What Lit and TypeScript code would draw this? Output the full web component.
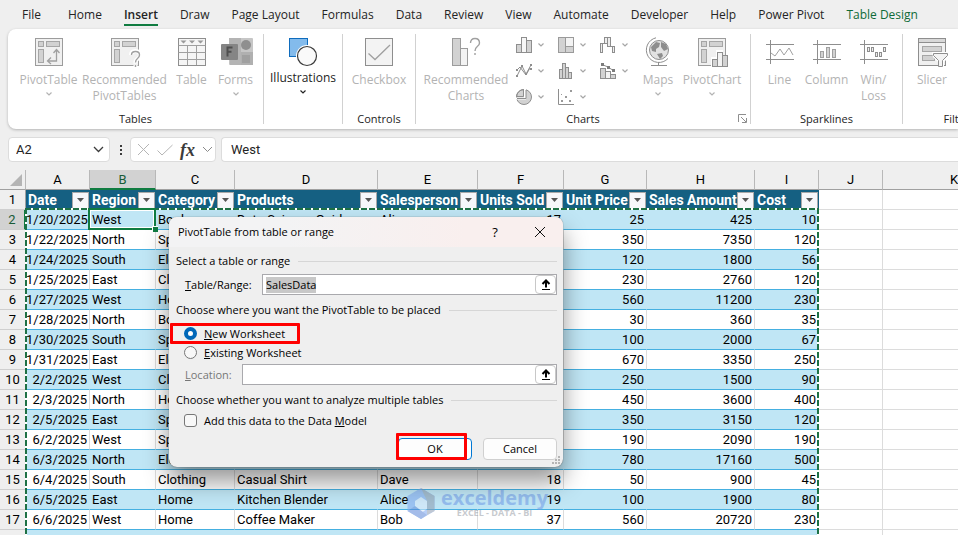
import { LitElement, html, svg, css, nothing } from "lit";
import { customElement } from "lit/decorators.js";
import { classMap } from "lit/directives/class-map.js";

const TABS = ["File", "Home", "Insert", "Draw", "Page Layout", "Formulas", "Data", "Review", "View", "Automate", "Developer", "Help", "Power Pivot", "Table Design"];

const HEADERS = ["Date", "Region", "Category", "Products", "Salesperson", "Units Sold", "Unit Price", "Sales Amount", "Cost"];
const LETTERS = "ABCDEFGHIJK".split("");

const ROWS: string[][] = [
  ["1/20/2025", "West", "Books", "Data Science Guide", "Alice", "17", "25", "425", "10"],
  ["1/22/2025", "North", "Sports", "", "", "", "350", "7350", "120"],
  ["1/24/2025", "South", "Electronics", "", "", "", "120", "1800", "56"],
  ["1/25/2025", "East", "Clothing", "", "", "", "230", "2760", "120"],
  ["1/27/2025", "West", "Home", "", "", "", "560", "11200", "230"],
  ["1/28/2025", "North", "Books", "", "", "", "30", "360", "35"],
  ["1/30/2025", "South", "Sports", "", "", "", "100", "2000", "67"],
  ["1/31/2025", "East", "Electronics", "", "", "", "670", "3350", "250"],
  ["2/2/2025", "West", "Clothing", "", "", "", "250", "1500", "90"],
  ["2/3/2025", "North", "Home", "", "", "", "450", "3600", "400"],
  ["2/5/2025", "East", "Sports", "", "", "", "350", "3150", "120"],
  ["6/2/2025", "West", "Sports", "", "", "", "190", "2090", "190"],
  ["6/3/2025", "North", "Electronics", "", "", "", "780", "17160", "500"],
  ["6/4/2025", "South", "Clothing", "Casual Shirt", "Dave", "18", "50", "900", "45"],
  ["6/5/2025", "East", "Home", "Kitchen Blender", "Alice", "19", "100", "1900", "80"],
  ["6/6/2025", "West", "Home", "Coffee Maker", "Bob", "37", "560", "20720", "230"],
  ["", "", "", "", "", "", "", "", ""],
];

const big = (body: unknown) => html`<svg class="big" viewBox="0 0 30 30" width="30" height="30" aria-hidden="true">${body}</svg>`;
const small = (body: unknown) => html`<svg viewBox="0 0 16 16" width="16" height="16" aria-hidden="true">${body}</svg>`;
const chevron = () => html`<svg class="chev" viewBox="0 0 6 4" width="6" height="4" aria-hidden="true"><path d="M.5 .5 3 3 5.5 .5" fill="none" stroke="currentColor" stroke-width="1.2"/></svg>`;

const pivotFrame = svg`<rect x="1.500" y="1.500" width="27" height="27" fill="#f0f0f0" stroke="#9c9c9c"/>
  <g fill="#d2d2d2" stroke="#a6a6a6"><rect x="4.500" y="4.500" width="5" height="5"/><rect x="12.500" y="4.500" width="13" height="5"/><rect x="4.500" y="12.500" width="5" height="13"/></g>`;

const sparkFrame = svg`<path d="M1 7.500H29M1 22.500H29M5.500 3V27" fill="none" stroke="#8e8e8e"/>`;

const ICON = {
  pivot: big(svg`${pivotFrame}<path d="M22.500 13v11H14M19.500 16l3-3.500 3 3.500M17 20.500 13.500 24l3.500 3" fill="none" stroke="#a0a0a0" stroke-width="1.300"/>`),
  recPivot: big(svg`${pivotFrame}<path d="M21 18q0-4 4.500-4t4.500 4q0 2.500-2.500 4t-2 4.500M25.500 28v2" fill="none" stroke="#fff" stroke-width="4"/><path d="M21.500 18q0-3.500 4-3.500t4 3.500q0 2-2 3.500t-2 4M25.500 28v2" fill="none" stroke="#a0a0a0" stroke-width="1.400"/>`),
  table: big(svg`<rect x="1.500" y="1.500" width="27" height="27" fill="#f5f5f5" stroke="#8e8e8e"/><path d="M1.500 8.500H28.500M1.500 15.500H28.500M1.500 22.500H28.500M10.500 8.500V28M19.500 8.500V28" stroke="#a0a0a0" fill="none"/><path d="M3.500 3.500h6L6.500 6.500zM12 3.500h6L15 6.500zM20.500 3.500h6L23.500 6.500z" fill="#9a9a9a"/>`),
  forms: big(svg`<rect x="8" y="1" width="24" height="27" rx="1" fill="#c6c6c6"/><path d="M8 1h12v27H9z" fill="#b4b4b4"/><rect x="20" y="15" width="12" height="13" fill="#b0b0b0"/><circle cx="25" cy="8" r="5" fill="#8f8f8f"/><rect x="21" y="18" width="8" height="8" fill="#a0a0a0"/><rect x="0" y="7" width="17" height="16" rx="1" fill="#858585"/><path d="M6.500 19.500v-9h5M6.500 14.800h4" fill="none" stroke="#4f4f4f" stroke-width="2"/>`),
  shapes: big(svg`<rect x="1.500" y="1.500" width="18" height="18" fill="#83bbec" stroke="#0f6cbd"/><circle cx="19" cy="19" r="11" fill="#fff"/><circle cx="19" cy="19" r="9.500" fill="#fafafa" stroke="#3b3b3b" stroke-width="1.200"/>`),
  check: big(svg`<rect x="1.500" y="1.500" width="27" height="27" fill="#f3f3f3" stroke="#8e8e8e"/><path d="M4.500 16.500l6.500 6L26 8" fill="none" stroke="#a0a0a0" stroke-width="1.300"/>`),
  recChart: big(svg`<g stroke="#9c9c9c"><rect x="1.500" y="1.500" width="8" height="27" fill="#d2d2d2"/><rect x="9.500" y="11.500" width="7" height="17" fill="#f3f3f3"/></g><path d="M19.500 6q0-4.500 4.500-4.500T28.500 6q0 2-2.200 3.500T24 14M24 16v2" fill="none" stroke="#a0a0a0" stroke-width="1.400"/>`),
  maps: big(svg`<circle cx="16" cy="13" r="9.500" fill="#e2e2e2" stroke="#8e8e8e"/><path d="M8 10l5-5 4 1-1 4-3 2 0 3-4-1zM18 5l5 2 2 5-4 2-3-4zM14 17l5-1 1 3-3 3z" fill="#8e8e8e"/><path d="M13 .8A12.500 12.500 0 1 0 25 21.500M15.500 25v3M8 28.500H24" fill="none" stroke="#8e8e8e"/>`),
  pivotChart: big(svg`${pivotFrame}<path d="M14 30V20h5v-7h7v5h5v12z" fill="#fff"/><g stroke="#8e8e8e" fill="#d2d2d2"><rect x="15.500" y="22.500" width="5" height="7"/><rect x="25.500" y="18.500" width="5" height="11"/><rect x="20.500" y="15.500" width="5" height="14" fill="#f3f3f3"/></g>`),
  line: big(svg`${sparkFrame}<path d="M6 16l4 3 5-7 4 6 5-7 4 7" fill="none" stroke="#a0a0a0"/>`),
  column: big(svg`${sparkFrame}<g fill="#d2d2d2" stroke="#a0a0a0"><rect x="8.500" y="14.500" width="3" height="6"/><rect x="14.500" y="10.500" width="3" height="10"/><rect x="20.500" y="12.500" width="3" height="8"/></g>`),
  winLoss: big(svg`${sparkFrame}<g fill="#eee" stroke="#8e8e8e"><rect x="8.500" y="10.500" width="2" height="4"/><rect x="12.500" y="10.500" width="2" height="4"/><rect x="16.500" y="15.500" width="2" height="4"/><rect x="20.500" y="15.500" width="2" height="4"/><rect x="24.500" y="10.500" width="2" height="4"/></g>`),
  slicer: big(svg`<rect x="1.500" y="1.500" width="27" height="27" fill="#f0f0f0" stroke="#8e8e8e"/><path d="M2 2h26v3H2z" fill="#d8d8d8"/><path d="M1.500 5.500h27" stroke="#8e8e8e"/><g fill="#d2d2d2" stroke="#a6a6a6"><rect x="5.500" y="9.500" width="19" height="5"/><rect x="5.500" y="18.500" width="12" height="5"/></g><path d="M15 15h17v5l-5 5v6h-5v-5l-6-6z" fill="#fff"/><path d="M16.500 16.500h14v2l-5 5v6h-4v-6l-5-5z" fill="#f3f3f3" stroke="#8e8e8e"/>`),
};

const CHARTS = [
  { name: "Column chart", icon: small(svg`<g stroke="#8e8e8e" fill="#d2d2d2"><rect x=".5" y="7.500" width="5" height="8"/><rect x="10.500" y="3.500" width="5" height="12"/><rect x="5.500" y=".5" width="5" height="15" fill="#f6f6f6"/></g>`) },
  { name: "Hierarchy chart", icon: small(svg`<g stroke="#9a9a9a" fill="#d2d2d2"><rect x=".5" y=".5" width="7" height="15"/><rect x="7.500" y=".5" width="8" height="9" fill="#f3f3f3"/><rect x="7.500" y="9.500" width="8" height="6"/></g>`) },
  { name: "Waterfall chart", icon: small(svg`<g stroke="#8e8e8e" fill="#eee"><rect x=".5" y="6.500" width="2" height="9"/><rect x="4.500" y=".5" width="3" height="6"/><rect x="7.500" y=".5" width="3" height="9"/><rect x="12.500" y="9.500" width="2" height="6"/><path d="M2.500 6.500h2M10.500 9.500h2"/></g>`) },
  { name: "Line chart", icon: small(svg`<path d="M1 13 6 3l4 8 5-9M1 7l3-3 6 8 4-7" fill="none" stroke="#8e8e8e"/><g fill="#8e8e8e"><path d="M0 12h2v2H0zM5 2h2v2H5zM9 10h2v2H9zM14 1h2v2h-2zM0 6h2v2H0zM14 5h2v2h-2z"/></g>`) },
  { name: "Statistic chart", icon: small(svg`<g stroke="#8e8e8e" fill="#d2d2d2"><rect x="1.500" y="6.500" width="3" height="9"/><rect x="4.500" y=".5" width="3" height="15"/><rect x="7.500" y="4.500" width="3" height="11"/><rect x="10.500" y="9.500" width="3" height="6"/></g>`) },
  { name: "Combo chart", icon: small(svg`<g stroke="#8e8e8e" fill="#d2d2d2"><rect x=".5" y="5.500" width="5" height="10"/><rect x="5.500" y="8.500" width="5" height="7" fill="#f3f3f3"/><rect x="10.500" y="11.500" width="5" height="4"/><path d="M2 1.500 8 4l6 4" fill="none"/></g><g fill="#7c7c7c"><path d="M1 0h3v3H1zM7 3h3v3H7zM12 6h3v3h-3z"/></g>`) },
  { name: "Pie chart", icon: small(svg`<circle cx="8" cy="8" r="7.500" fill="#d2d2d2" stroke="#8e8e8e"/><path d="M9 0v9.500H0" fill="none" stroke="#fff" stroke-width="2"/><path d="M7.500 .5V7.500H.5A7.500 7.500 0 0 1 7.500 .5zM10 1v8.500H1" fill="none" stroke="#8e8e8e"/>`) },
  { name: "Scatter chart", icon: small(svg`<path d="M.5 0v15.500H16" fill="none" stroke="#8e8e8e"/><g fill="#9a9a9a"><path d="M3 11h2v2H3zM7 7h2v2H7zM12 1h2v2h-2zM11 11h2v2h-2zM3 5h1v1H3z"/></g>`) },
];

const tool = (icon: unknown, lines: string[], drop = false, active = false) => html`
  <button class=${classMap({ tool: true, active })}>
    ${icon}
    ${lines.map((l) => html`<span>${l}</span>`)}
    ${drop ? chevron() : nothing}
  </button>`;

@customElement("ribbon-bar")
export class RibbonBar extends LitElement {
  static styles = css`
    :host { display: block; font: 12px/16px "Open Sans", "Noto Sans", sans-serif; color: #242424; }
    button { font: inherit; color: inherit; background: none; border: 0; padding: 0; }
    nav { display: flex; gap: 22px; padding: 6px 22px 0; height: 23px; white-space: nowrap; }
    nav button { height: 20px; line-height: 18px; border-bottom: 2px solid transparent; }
    nav .file { margin-right: 5px; }
    nav .current { font-weight: 600; border-color: #107c41; }
    nav .context { color: #0e6b38; }
    .ribbon { display: flex; margin-left: 8px; background: #fff; border-radius: 8px 0 0 8px; height: 100px; overflow: hidden; box-shadow: 0 1px 3px rgba(0, 0, 0, .25); }
    .group { display: flex; flex-direction: column; justify-content: space-between; flex: none; position: relative; border-right: 1px solid #d1d1d1; margin: 5px 0; padding: 3px 0 0; }
    .group h2 { margin: 0; font-size: 11px; line-height: 10px; font-weight: 400; text-align: center; color: #242424; }
    .tools { display: grid; align-items: start; justify-content: center; }
    .tables { width: 255px; }
    .tables .tools { grid-template-columns: 64px 88px 46px 42px; padding-left: 2px; }
    .illustrations { width: 78px; }
    .controls { width: 72px; }
    .charts { width: 334px; }
    .charts .tools { grid-template-columns: 84px 134px 32px 76px; justify-content: start; padding-left: 8px; }
    .sparklines { width: 151px; }
    .sparklines .tools { grid-template-columns: 46px 48px 46px; }
    .filters { width: 112px; border: 0; }
    .filters .tools { grid-template-columns: 46px 60px; justify-content: start; padding-left: 6px; }
    .tool { display: flex; flex-direction: column; align-items: center; color: #b3b3b3; white-space: nowrap; }
    .tool .big { margin-bottom: 5px; overflow: visible; }
    .tool .chev { margin-top: 4px; }
    .tool.active { color: #242424; }
    .tool.active .big { margin-bottom: 3px; }
    .minis { display: grid; grid-template-columns: repeat(3, 42px); grid-template-rows: 26px 26px 16px; padding-left: 8px; }
    .mini { display: flex; align-items: center; align-self: start; gap: 6px; color: #a6a6a6; }
    .launcher { position: absolute; right: 3px; bottom: 1px; display: flex; color: #8e8e8e; }
  `;

  render() {
    return html`
      <nav aria-label="Ribbon tabs">
        ${TABS.map((t) => html`<button class=${classMap({ file: t === "File", current: t === "Insert", context: t === "Table Design" })}>${t}</button>`)}
      </nav>
      <div class="ribbon">
        <section class="group tables">
          <div class="tools">
            ${tool(ICON.pivot, ["PivotTable"], true)}
            ${tool(ICON.recPivot, ["Recommended", "PivotTables"])}
            ${tool(ICON.table, ["Table"])}
            ${tool(ICON.forms, ["Forms"], true)}
          </div>
          <h2>Tables</h2>
        </section>
        <section class="group illustrations"><div class="tools">${tool(ICON.shapes, ["Illustrations"], true, true)}</div></section>
        <section class="group controls"><div class="tools">${tool(ICON.check, ["Checkbox"])}</div><h2>Controls</h2></section>
        <section class="group charts">
          <div class="tools">
            ${tool(ICON.recChart, ["Recommended", "Charts"])}
            <div class="minis">${CHARTS.map((c) => html`<button class="mini" aria-label=${c.name}>${c.icon}${chevron()}</button>`)}</div>
            ${tool(ICON.maps, ["Maps"], true)}
            ${tool(ICON.pivotChart, ["PivotChart"], true)}
          </div>
          <h2>Charts</h2>
          <button class="launcher" aria-label="Chart options"><svg viewBox="0 0 9 9" width="9" height="9"><path d="M8 .5H.5V8M3 3l5 5M8.500 4v4.500H4" fill="none" stroke="currentColor"/></svg></button>
        </section>
        <section class="group sparklines">
          <div class="tools">${tool(ICON.line, ["Line"])}${tool(ICON.column, ["Column"])}${tool(ICON.winLoss, ["Win/", "Loss"])}</div>
          <h2>Sparklines</h2>
        </section>
        <section class="group filters">
          <div class="tools">${tool(ICON.slicer, ["Slicer"])}</div>
          <h2>Filters</h2>
        </section>
      </div>`;
  }
}

@customElement("formula-bar")
export class FormulaBar extends LitElement {
  static styles = css`
    :host { display: flex; gap: 5px; padding: 8px 0 8px 8px; font: 13px/16px Roboto, "Open Sans", sans-serif; color: #242424; }
    .box { display: flex; align-items: center; box-sizing: border-box; height: 25px; background: #fff; border: 1px solid #dcdcdc; border-radius: 4px; }
    input { font: inherit; color: inherit; border: 0; outline: 0; padding: 0; background: none; flex: 1; min-width: 0; }
    .name { width: 102px; padding: 0 5px 0 7px; }
    .dots { width: 11px; display: flex; align-items: center; justify-content: center; }
    .fx { width: 86px; justify-content: space-between; padding: 0 2px 0 6px; margin-left: -1px; }
    .fx button { display: flex; border: 0; padding: 0; background: none; color: #b5b5b5; }
    .fx .insert { font: italic 700 18px/20px "Liberation Serif", serif; color: #3b3b3b; }
    .value { flex: 1; border-radius: 4px 0 0 4px; border-right: 0; padding-left: 9px; }
  `;

  render() {
    return html`
      <div class="box name">
        <input aria-label="Name box" value="A2" />
        <svg viewBox="0 0 11 7" width="11" height="7"><path d="M1 1l4.500 4.500L10 1" fill="none" stroke="#3b3b3b" stroke-width="1.300"/></svg>
      </div>
      <div class="dots"><svg viewBox="0 0 2 10" width="2" height="10"><path d="M0 0h2v2H0zM0 4h2v2H0zM0 8h2v2H0z" fill="#3b3b3b"/></svg></div>
      <div class="box fx">
        <button aria-label="Cancel entry"><svg viewBox="0 0 13 13" width="13" height="13"><path d="M1 1l11 11M12 1 1 12" stroke="currentColor" fill="none"/></svg></button>
        <button aria-label="Accept entry"><svg viewBox="0 0 16 12" width="16" height="12"><path d="M.5 6.500l4.500 4.500L15.500 1" stroke="currentColor" fill="none"/></svg></button>
        <button class="insert" aria-label="Insert function">fx</button>
        <svg viewBox="0 0 11 7" width="11" height="7"><path d="M1 1l4.500 4.500L10 1" fill="none" stroke="#8a8a8a"/></svg>
      </div>
      <div class="box value"><input aria-label="Formula" value="West" /></div>`;
  }
}

@customElement("sheet-grid")
export class SheetGrid extends LitElement {
  static styles = css`
    :host { display: block; position: relative; font: 13px/16px Roboto, "Open Sans", sans-serif; color: #000; background: #fff; }
    table { border-collapse: separate; border-spacing: 0; table-layout: fixed; width: 1026px; }
    th, td { box-sizing: border-box; height: 20px; padding: 1px 2px 0; border-right: 1px solid #dcdcdc; border-bottom: 1px solid #dcdcdc; text-align: left; font-weight: 400; white-space: nowrap; overflow: hidden; }
    .r { width: 26px; } .a, .i, .j { width: 64px; } .b { width: 66px; } .c { width: 79px; } .d, .k { width: 143px; }
    .e { width: 100px; } .f { width: 86px; } .g { width: 83px; } .h { width: 108px; }
    thead th { background: #efefef; text-align: center; border-right-color: #b8b8b8; border-bottom-color: #a0a0a0; }
    thead .corner svg { display: block; margin-left: 8px; }
    tbody th[scope="row"] { background: #efefef; text-align: center; padding: 1px 0 0; border-right-color: #a0a0a0; border-bottom-color: #cfcfcf; }
    thead .on { background: #d2d2d2; color: #1a5c38; border-bottom: 2px solid #107c41; }
    tbody th.on[scope="row"] { background: #d2d2d2; color: #1a5c38; border-right: 2px solid #107c41; }
    .head { background: #156082; color: #fff; font-size: 14px; font-weight: 700; border-color: #156082; padding-right: 0; }
    .head > div { display: flex; align-items: center; justify-content: space-between; }
    .head button { flex: none; width: 17px; height: 17px; padding: 0; display: flex; align-items: center; justify-content: center; background: #f6f7fa; border: 1px solid #a9a9a9; }
    .cell { border-bottom-color: #45b0e1; }
    .cell.num { text-align: right; padding-left: 0; }
    .band .cell { background: #c0e6f5; border-right-color: #c0e6f5; }
    .ants { position: absolute; top: 38px; left: 25px; width: 794px; height: 400px; pointer-events: none;
      background:
        repeating-linear-gradient(90deg, #1e7145 0 6px, #fff 6px 8px) 0 0 / 100% 2px no-repeat,
        repeating-linear-gradient(180deg, #1e7145 0 6px, #fff 6px 8px) 0 0 / 2px 100% no-repeat,
        repeating-linear-gradient(180deg, #1e7145 0 6px, #fff 6px 8px) 100% 0 / 2px 100% no-repeat; }
    .cursor { position: absolute; top: 38px; left: 88px; width: 64px; height: 18px; border: 2px solid #107c41; box-shadow: inset 0 0 0 1px #fff; }
    .cursor::after { content: ""; position: absolute; right: -4px; bottom: -4px; width: 5px; height: 5px; background: #107c41; border: solid #fff; border-width: 1px 0 0 1px; }
  `;

  render() {
    return html`
      <table>
        <colgroup><col class="r" />${LETTERS.map((l) => html`<col class=${l.toLowerCase()} />`)}</colgroup>
        <thead>
          <tr>
            <th class="corner" aria-label="Select all"><svg viewBox="0 0 12 12" width="12" height="12"><path d="M12 0v12H0z" fill="#b4b4b4"/></svg></th>
            ${LETTERS.map((l) => html`<th scope="col" class=${classMap({ on: l === "B" })}>${l}</th>`)}
          </tr>
        </thead>
        <tbody>
          <tr>
            <th scope="row">1</th>
            ${HEADERS.map((h) => html`<th class="head"><div>${h}<button aria-label="Filter ${h}"><svg viewBox="0 0 7 4" width="7" height="4"><path d="M0 0h7L3.500 4z" fill="#555"/></svg></button></div></th>`)}
            <td></td><td></td>
          </tr>
          ${ROWS.map((row, r) => html`
            <tr class=${classMap({ band: r % 2 === 0 })}>
              <th scope="row" class=${classMap({ on: r === 0 })}>${r + 2}</th>
              ${row.map((v, c) => html`<td class=${classMap({ cell: true, num: c === 0 || c > 4 })}>${v}</td>`)}
              <td></td><td></td>
            </tr>`)}
        </tbody>
      </table>
      <div class="ants"></div>
      <div class="cursor"></div>`;
  }
}

const upArrow = html`<svg viewBox="0 0 10 12" width="10" height="12" aria-hidden="true"><path d="M5 1.500v7M1.500 5 5 1.500 8.500 5" fill="none" stroke="#000" stroke-width="2"/><path d="M1 10.500h8" stroke="#000"/></svg>`;

@customElement("pivot-dialog")
export class PivotDialog extends LitElement {
  static styles = css`
    :host { display: block; box-sizing: border-box; width: 394px; height: 250px; font: 11px/16px "Open Sans", "Noto Sans", sans-serif; color: #000; background: #efefef; border-radius: 8px; overflow: hidden; box-shadow: 0 0 1px rgba(0, 0, 0, .7), 0 14px 24px rgba(0, 0, 0, .42); }
    header { display: flex; align-items: center; height: 30px; padding: 0 17px 0 9px; background: linear-gradient(90deg, #f3f3f4 30%, #f9efee 75%); }
    h1 { margin: 0; flex: 1; font-size: 11px; font-weight: 400; line-height: 16px; }
    header button { border: 0; padding: 0; background: none; font: 500 13px/16px "Open Sans", sans-serif; width: 12px; display: flex; justify-content: center; }
    header .close { margin-left: 33px; }
    form { display: flex; flex-direction: column; padding: 6px 6px 0 7px; }
    .title { display: flex; align-items: center; gap: 8px; height: 16px; white-space: nowrap; }
    .title::after { content: ""; flex: 1; height: 1px; background: #d6d6d6; }
    .field { display: flex; align-items: center; height: 21px; }
    .field label { width: 77px; }
    .first { margin: 5px 0 7px 9px; }
    .location { margin: 2px 0 7px 9px; color: #777; }
    .location label { width: 57px; }
    .ref { flex: 1; display: flex; box-sizing: border-box; height: 21px; background: #fff; border: 1px solid #a9a9ad; }
    .ref input { flex: 1; min-width: 0; border: 0; outline: 0; padding: 0 3px; font: inherit; background: none; }
    .ref input::selection { background: #c8c8c8; color: #000; }
    .ref button { width: 21px; display: flex; align-items: center; justify-content: center; padding: 0; background: #fff; border: 1px solid #c8c8c8; border-radius: 4px; }
    .option { display: flex; align-items: center; gap: 7px; height: 19px; margin-left: 8px; }
    .option input { appearance: none; box-sizing: border-box; width: 13px; height: 13px; margin: 0; border: 1px solid #777; border-radius: 50%; background: #f8f8f8; }
    .option input:checked { border: 4px solid #0067b8; background: #fff; }
    .option input[type="checkbox"] { border-radius: 3px; }
    .radios { padding-top: 6px; }
    .model { margin-top: 3px; }
    .actions { display: flex; justify-content: flex-end; gap: 11px; padding-top: 8px; }
    .actions button { box-sizing: border-box; width: 74px; height: 22px; font: inherit; color: #000; background: #fdfdfd; border: 1px solid #d0d0d0; border-radius: 4px; padding: 0; }
    .actions .ok { border-color: #0078d4; }
    .grip { position: absolute; right: 2px; bottom: 2px; }
  `;

  firstUpdated() {
    const box = this.renderRoot.querySelector<HTMLInputElement>("#range")!;
    box.focus();
    box.select();
  }

  render() {
    return html`
      <header>
        <h1>PivotTable from table or range</h1>
        <button aria-label="Help">?</button>
        <button class="close" aria-label="Close"><svg viewBox="0 0 12 12" width="12" height="12"><path d="M1 1l10 10M11 1 1 11" stroke="#111" fill="none"/></svg></button>
      </header>
      <form @submit=${(e: Event) => e.preventDefault()}>
        <div class="title">Select a table or range</div>
        <div class="field first">
          <label for="range"><u>T</u>able/Range:</label>
          <div class="ref"><input id="range" value="SalesData" /><button type="button" aria-label="Collapse dialog">${upArrow}</button></div>
        </div>
        <div class="title">Choose where you want the PivotTable to be placed</div>
        <div class="radios">
          <label class="option"><input type="radio" name="place" checked /><span><u>N</u>ew Worksheet</span></label>
          <label class="option"><input type="radio" name="place" /><span><u>E</u>xisting Worksheet</span></label>
        </div>
        <div class="field location">
          <label for="loc"><u>L</u>ocation:</label>
          <div class="ref"><input id="loc" /><button type="button" aria-label="Pick location">${upArrow}</button></div>
        </div>
        <div class="title">Choose whether you want to analyze multiple tables</div>
        <label class="option model"><input type="checkbox" /><span>Add this data to the Data <u>M</u>odel</span></label>
        <div class="actions"><button class="ok">OK</button><button type="button">Cancel</button></div>
      </form>
      <svg class="grip" viewBox="0 0 9 9" width="9" height="9"><path d="M6 0h2v2H6zM3 3h2v2H3zM6 3h2v2H6zM0 6h2v2H0zM3 6h2v2H3zM6 6h2v2H6z" fill="#b5b5b5"/></svg>`;
  }
}

@customElement("app-root")
export class AppRoot extends LitElement {
  static styles = css`
    :host { display: flex; flex-direction: column; position: relative; height: 100vh; overflow: hidden; background: #efefef; }
    sheet-grid { flex: 1; min-height: 0; overflow: hidden; }
    pivot-dialog { position: absolute; left: 169px; top: 217px; }
    .mark { position: absolute; box-sizing: border-box; border: 3px solid #f00; pointer-events: none; border-radius: 1px; }
    .mark-new { left: 170px; top: 323px; width: 130px; height: 21px; }
    .mark-ok { left: 396px; top: 433px; width: 71px; height: 27px; }
    .brand { position: absolute; left: 407px; top: 488px; display: flex; gap: 6px; opacity: .55; pointer-events: none; font-family: "Open Sans", sans-serif; font-weight: 700; white-space: nowrap; }
    .words { display: flex; flex-direction: column; align-items: center; }
    .name { font-size: 20px; line-height: 20px; color: #6f9be8; }
    .tag { font-size: 9px; line-height: 10px; color: #9a9fa8; }
  `;

  render() {
    return html`
      <ribbon-bar></ribbon-bar>
      <formula-bar></formula-bar>
      <sheet-grid></sheet-grid>
      <div class="brand">
        <svg viewBox="0 0 28 31" width="28" height="31" aria-hidden="true"><path d="M14 0l13.500 8v15L14 31 .5 23V8z" fill="#7da7f0"/><path d="M14 0l13.500 8v15L20 27V13z" fill="#8b9bb0"/><path d="M14 9l6 4v8l-6 4-6-4v-8z" fill="#dcebfb"/><path d="M.5 23 8 18l12 9-6 4z" fill="#5a86d8"/></svg>
        <div class="words"><span class="name">exceldemy</span><span class="tag">EXCEL - DATA - BI</span></div>
      </div>
      <pivot-dialog role="dialog" aria-label="PivotTable from table or range"></pivot-dialog>
      <div class="mark mark-new"></div>
      <div class="mark mark-ok"></div>`;
  }
}
